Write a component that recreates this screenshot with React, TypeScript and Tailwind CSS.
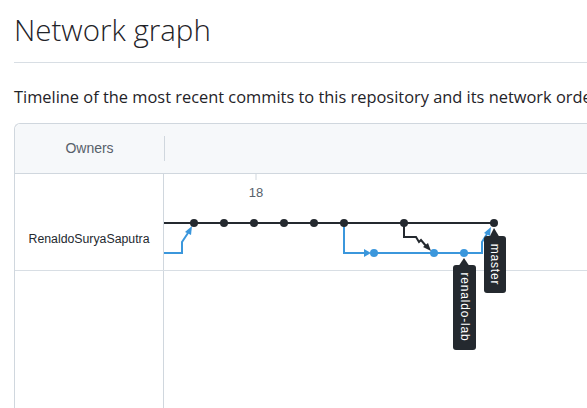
export default function App() {
  const dark = "#24292f";
  const blue = "#3b97dc";
  const mainDots = [194, 224, 254, 284, 314, 344, 404, 494];
  const branchDots = [374, 434, 464];

  return (
    <div className="w-[587px] h-[408px] overflow-hidden bg-white pl-[14px] font-['Open_Sans',sans-serif] text-[#1f2328]">
      {/* Heading */}
      <h2 className="pt-[10px] text-[29.5px] leading-[40px] font-light whitespace-nowrap">Network graph</h2>
      <div className="mt-[12px] border-b border-[#d8dee4]" />

      <p className="mt-[23px] text-[16.4px] leading-[22px] whitespace-nowrap">
        Timeline of the most recent commits to this repository and its network ordered by most recently pushed to.
      </p>

      {/* Graph container */}
      <div className="mt-[15px] border-l border-t border-[#d0d7de] rounded-tl-md">
        {/* Header */}
        <div className="flex h-[50px] bg-[#f6f8fa] border-b border-[#d0d7de] rounded-tl-md">
          <div className="w-[149px] flex items-center justify-center text-[14px] text-[#57606a] font-['Liberation_Sans',sans-serif]">
            Owners
          </div>
          <div className="flex items-center">
            <div className="w-px h-[25px] bg-[#d0d7de]" />
          </div>
          <div className="flex-1" />
        </div>

        {/* Body rows */}
        <div className="flex h-[97px] border-b border-[#d8dee4]">
          <div className="w-[149px] border-r border-[#d0d7de] flex items-end justify-center pb-[22px] text-[12.3px] text-[#24292f] font-['Liberation_Sans',sans-serif]">
            RenaldoSuryaSaputra
          </div>
          <div className="flex-1 relative">
            <svg
              className="absolute left-0 top-0 overflow-visible z-10"
              width="422"
              height="234"
              viewBox="164 174 422 234"
              fontFamily="Liberation Sans, Arial, sans-serif"
            >
              {/* date tick */}
              <line x1="256" y1="174" x2="256" y2="180" stroke="#d0d7de" strokeWidth="1" />
              <text x="256" y="197" textAnchor="middle" fontSize="13" fill="#57606a">18</text>

              {/* main line */}
              <path d="M164 223 H494" stroke={dark} strokeWidth="2" fill="none" />

              {/* incoming branch at left */}
              <path d="M164 253 H182 V242 L188 233" stroke={blue} strokeWidth="2" fill="none" />
              <polygon points="185,232 192,226 191,235" fill={blue} />

              {/* branch off from 344 */}
              <path d="M344 223 V253 H366" stroke={blue} strokeWidth="2" fill="none" />
              <polygon points="364,249 371,253 364,257" fill={blue} />
              <path d="M374 253 H482 V242 L487 234" stroke={blue} strokeWidth="2" fill="none" />
              <polygon points="484,233 491,227 490,236" fill={blue} />

              {/* merge from 404 into branch */}
              <path d="M404 223 V237 H416 L419 242 L421 240 L426 246" stroke={dark} strokeWidth="2" fill="none" />
              <polygon points="423,247 431,251 428,243" fill={dark} />

              {mainDots.map((x) => (
                <circle key={x} cx={x} cy="223" r="4" fill={dark} />
              ))}
              {branchDots.map((x) => (
                <circle key={x} cx={x} cy="253" r="4" fill={blue} />
              ))}

              {/* labels */}
              <polygon points="458,267 464,258 470,267" fill={dark} />
              <rect x="453" y="265" width="23" height="85" rx="3" fill={dark} />
              <text
                x="0"
                y="0"
                transform="translate(460.5 307) rotate(90)"
                textAnchor="middle"
                fontSize="12"
                letterSpacing="0.8"
                fill="#ffffff"
              >
                renaldo-lab
              </text>

              <polygon points="489,238 494,228 500,238" fill={dark} />
              <rect x="484" y="236" width="22" height="57" rx="3" fill={dark} />
              <text
                x="0"
                y="0"
                transform="translate(491 264.5) rotate(90)"
                textAnchor="middle"
                fontSize="12"
                letterSpacing="0.8"
                fill="#ffffff"
              >
                master
              </text>
            </svg>
          </div>
        </div>
        <div className="flex h-[200px]">
          <div className="w-[149px] border-r border-[#d0d7de]" />
          <div className="flex-1" />
        </div>
      </div>
    </div>
  );
}
